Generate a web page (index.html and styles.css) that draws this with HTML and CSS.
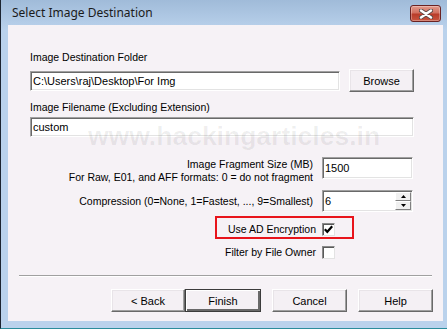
FILE: index.html
```html
<!DOCTYPE html>
<html lang="en">
<head>
    <meta charset="UTF-8">
    <title>Select Image Destination</title>
    <link rel="stylesheet" href="styles.css">
</head>
<body>
    <div class="window">
        <div class="titlebar">
            <span class="title">Select Image Destination</span>
            <button class="close" title="Close">
                <svg width="14" height="10" viewBox="0 0 14 10">
                    <path d="M2 1.5 L12 8.5 M12 1.5 L2 8.5" stroke="#5a4a48" stroke-width="4.2" stroke-linecap="round"/>
                    <path d="M2 1.5 L12 8.5 M12 1.5 L2 8.5" stroke="#fff" stroke-width="2.4" stroke-linecap="round"/>
                </svg>
            </button>
        </div>
        <div class="content">
            <div class="form">
                <div class="label first">Image Destination Folder</div>
                <div class="path-row">
                    <div class="field path">C:\Users\raj\Desktop\For Img</div>
                    <button class="btn browse">Browse</button>
                </div>
                <div class="label second">Image Filename (Excluding Extension)</div>
                <div class="field">custom</div>

                <div class="opt-row fragment">
                    <div class="opt-label">Image Fragment Size (MB)<br>For Raw, E01, and AFF formats: 0 = do not fragment</div>
                    <div class="field small tall">1500</div>
                </div>
                <div class="opt-row compression">
                    <div class="opt-label">Compression (0=None, 1=Fastest, ..., 9=Smallest)</div>
                    <div class="field small spin">
                        <span>6</span>
                        <span class="spin-btns">
                            <span class="spin-btn"><svg width="5" height="3" viewBox="0 0 5 3"><path d="M2.5 0 L5 3 L0 3 Z" fill="#000"/></svg></span>
                            <span class="spin-btn"><svg width="5" height="3" viewBox="0 0 5 3"><path d="M0 0 L5 0 L2.5 3 Z" fill="#000"/></svg></span>
                        </span>
                    </div>
                </div>

                <div class="check-row encryption">
                    <span>Use AD Encryption</span>
                    <span class="check">
                        <svg width="9" height="9" viewBox="0 0 9 9"><path d="M0.8 4.2 L3.3 6.8 L8.2 1.2" fill="none" stroke="#000" stroke-width="2.2"/></svg>
                    </span>
                </div>
                <div class="check-row owner">
                    <span>Filter by File Owner</span>
                    <span class="check"></span>
                </div>

                <div class="watermark">www.hackingarticles.in</div>
                <div class="highlight"></div>
            </div>

            <div class="separator"></div>

            <div class="actions">
                <button class="btn">&lt; Back</button>
                <button class="btn default">Finish</button>
                <button class="btn">Cancel</button>
                <button class="btn">Help</button>
            </div>
        </div>
    </div>
</body>
</html>
```

FILE: styles.css
```css
html, body {
    margin: 0;
    padding: 0;
}
body {
    width: 447px;
    height: 329px;
    overflow: hidden;
    font-family: "Liberation Sans", Arial, sans-serif;
    font-size: 10.5px;
    color: #000;
}
.window {
    box-sizing: border-box;
    width: 447px;
    height: 329px;
    display: flex;
    flex-direction: column;
    padding: 0 4px 7px 7px;
    border-left: 1px solid #1c2430;
    border-bottom: 1px solid #2b8d9c;
    background: linear-gradient(#a0bbd9 0, #bad2ec 30px, #bad2ec 100%);
}
.titlebar {
    height: 25px;
    flex: none;
    display: flex;
    align-items: flex-start;
    justify-content: space-between;
}
.title {
    font-family: "Noto Sans", "Open Sans", sans-serif;
    font-size: 12px;
    line-height: 16px;
    margin: 5px 0 0 4px;
    color: #1b1b1b;
}
.close {
    box-sizing: border-box;
    width: 31px;
    height: 17px;
    margin: 5px 2px 0 0;
    padding: 0;
    border: 1px solid #6a2222;
    border-radius: 3px;
    background: linear-gradient(#e39a8c 0, #d27060 45%, #b93c2a 55%, #c85540 100%);
    box-shadow: inset 0 0 0 1px rgba(255, 255, 255, 0.3);
    display: flex;
    align-items: center;
    justify-content: center;
}
.content {
    flex: 1;
    position: relative;
    display: flex;
    flex-direction: column;
    background: #f6f2f6;
}
.form {
    position: relative;
    padding: 0 29px 0 22px;
}
.label {
    line-height: 13px;
    white-space: nowrap;
}
.label.first {
    margin: 26px 0 5px;
}
.label.second {
    margin: 9px 0 3px;
}
.field {
    box-sizing: border-box;
    height: 20px;
    background: #fff;
    border: 1px solid;
    border-color: #a0a0a0 #fff #fff #a0a0a0;
    box-shadow: inset 1px 1px 0 #696969, inset -1px -1px 0 #e3e3e3;
    font-size: 11px;
    line-height: 15px;
    padding: 2px 3px 0 2px;
    white-space: nowrap;
    position: relative;
}
.path-row {
    display: flex;
    align-items: center;
    gap: 9px;
    height: 23px;
}
.path {
    width: 310px;
}
.btn {
    box-sizing: border-box;
    height: 23px;
    width: 75px;
    padding: 0;
    font-family: "Liberation Sans", Arial, sans-serif;
    font-size: 11px;
    color: #000;
    background: #f4f0f4;
    border: 1px solid;
    border-color: #fff #696969 #696969 #fff;
    box-shadow: inset -1px -1px 0 #a0a0a0, inset 1px 1px 0 #e8e4e8;
}
.browse {
    width: 65px;
}
.opt-row {
    display: flex;
    justify-content: flex-end;
    align-items: flex-start;
    gap: 9px;
    padding-right: 1px;
}
.opt-row.fragment {
    margin-top: 20px;
}
.opt-row.fragment .opt-label {
    padding-top: 1px;
}
.opt-row.compression {
    margin-top: 6px;
    align-items: center;
}
.opt-label {
    text-align: right;
    line-height: 13px;
    white-space: nowrap;
}
.small {
    width: 91px;
    height: 22px;
}
.tall {
    padding-top: 3px;
}
.spin {
    display: flex;
    justify-content: space-between;
    padding-top: 3px;
}
.spin-btns {
    position: absolute;
    right: 1px;
    top: 1px;
    bottom: 1px;
    width: 16px;
    display: flex;
    flex-direction: column;
}
.spin-btn {
    flex: 1;
    box-sizing: border-box;
    display: flex;
    align-items: center;
    justify-content: center;
    background: #f0f0f0;
    border: 1px solid;
    border-color: #fff #808080 #808080 #fff;
}
.check-row {
    display: flex;
    justify-content: flex-end;
    align-items: center;
    gap: 6px;
    margin-right: 79px;
    line-height: 13px;
}
.check-row.encryption {
    margin-top: 11px;
}
.check-row.owner {
    margin-top: 10px;
}
.check {
    box-sizing: border-box;
    width: 13px;
    height: 13px;
    background: #fff;
    border: 1px solid;
    border-color: #8a8a8a #e3e3e3 #e3e3e3 #8a8a8a;
    box-shadow: inset 1px 1px 0 #5a5a5a;
    display: flex;
    align-items: center;
    justify-content: center;
}
.watermark {
    position: absolute;
    left: 80px;
    top: 96px;
    font-family: "Liberation Sans", Arial, sans-serif;
    font-weight: bold;
    font-size: 26.5px;
    color: rgba(0, 0, 0, 0.065);
    pointer-events: none;
    white-space: nowrap;
}
.highlight {
    position: absolute;
    left: 207px;
    top: 191px;
    width: 139px;
    height: 23px;
    box-sizing: border-box;
    border: 2px solid #e8141b;
}
.separator {
    margin: 16px 11px 0;
    height: 1px;
    background: #a0a0a0;
    border-bottom: 1px solid #fff;
}
.actions {
    display: flex;
    justify-content: flex-end;
    padding: 12px 10px 0 0;
}
.actions .btn + .btn {
    margin-left: 11px;
}
.actions .btn.default {
    margin-left: 0;
    width: 76px;
    border: 1px solid #3c3c3c;
    box-shadow: inset 1px 1px 0 #fff, inset -2px -2px 0 #696969;
}
.actions .btn:first-child {
    width: 74px;
}
```
